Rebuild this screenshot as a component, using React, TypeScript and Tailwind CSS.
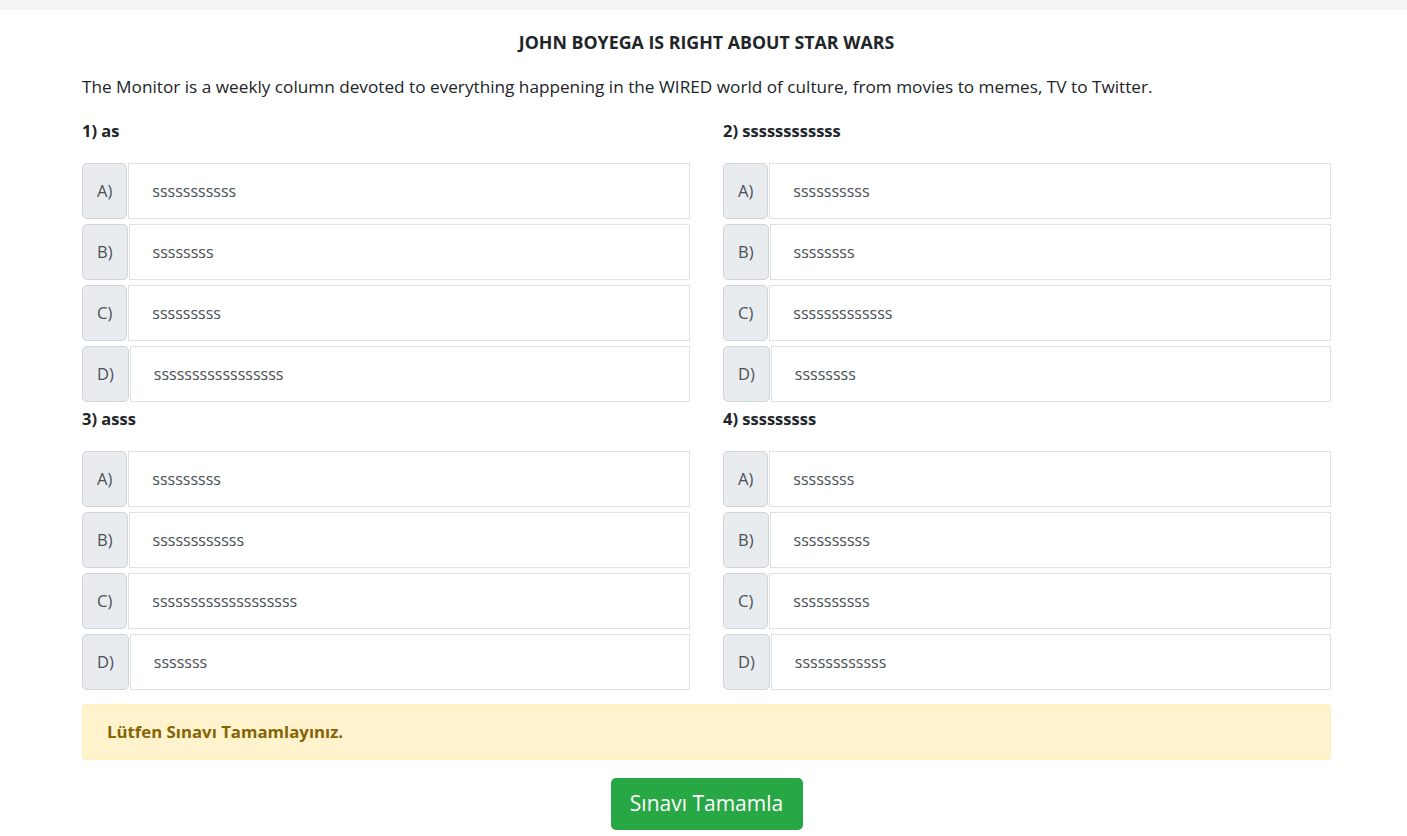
import React from "react";

type Q = { title: string; options: string[] };

const questions: Q[] = [
  { title: "1) as", options: ["sssssssssss", "ssssssss", "sssssssss", "sssssssssssssssss"] },
  { title: "2) ssssssssssss", options: ["ssssssssss", "ssssssss", "sssssssssssss", "ssssssss"] },
  { title: "3) asss", options: ["sssssssss", "ssssssssssss", "sssssssssssssssssss", "sssssss"] },
  { title: "4) sssssssss", options: ["ssssssss", "ssssssssss", "ssssssssss", "ssssssssssss"] },
];

const letters = ["A)", "B)", "C)", "D)"];

function Question({ q }: { q: Q }) {
  return (
    <div className="flex flex-col">
      <div className="h-[22px] leading-[22px] text-[16.5px] font-bold text-[#212529] mt-[6px] mb-[21px]">{q.title}</div>
      <div className="flex flex-col gap-[5px]">
        {q.options.map((o, i) => (
          <div key={i} className="flex h-[56px] gap-[1px]">
            <div className="flex items-center px-[14px] bg-[#e9ecef] border border-[#ced4da] rounded-[5px] text-[16.5px] text-[#495057]">
              {letters[i]}
            </div>
            <div className="flex-1 flex items-center pl-[23px] bg-white border border-[#dee2e6] text-[16px] text-[#495057]">
              {o}
            </div>
          </div>
        ))}
      </div>
    </div>
  );
}

export default function App() {
  return (
    <div className="min-h-[836px] bg-white" style={{ fontFamily: '"Open Sans", "Noto Sans", sans-serif' }}>
      <div className="h-[10px] bg-[#f4f4f4]" />
      <div className="ml-[82px] w-[1249px]">
        <div className="mt-[21px] text-center text-[17.8px] font-bold text-[#212529] leading-[22px]">
          JOHN BOYEGA IS RIGHT ABOUT STAR WARS
        </div>
        <div className="mt-[22px] text-[17.2px] text-[#212529] leading-[24px]">
          The Monitor is a weekly column devoted to everything happening in the WIRED world of culture, from movies to memes, TV to Twitter.
        </div>
        <div className="grid grid-cols-2 gap-x-[33px] mt-[15px]">
          {questions.map((q, i) => (
            <Question key={i} q={q} />
          ))}
        </div>
        <div className="mt-[14px] h-[56px] flex items-center pl-[24px] bg-[#fff3cd] border border-[#ffeeba] rounded-[4px] text-[16.8px] font-bold text-[#856404]">
          Lütfen Sınavı Tamamlayınız.
        </div>
        <div className="flex justify-center mt-[18px]">
          <button className="w-[192px] h-[52px] bg-[#28a745] rounded-[5px] text-white text-[21px]">Sınavı Tamamla</button>
        </div>
      </div>
    </div>
  );
}
